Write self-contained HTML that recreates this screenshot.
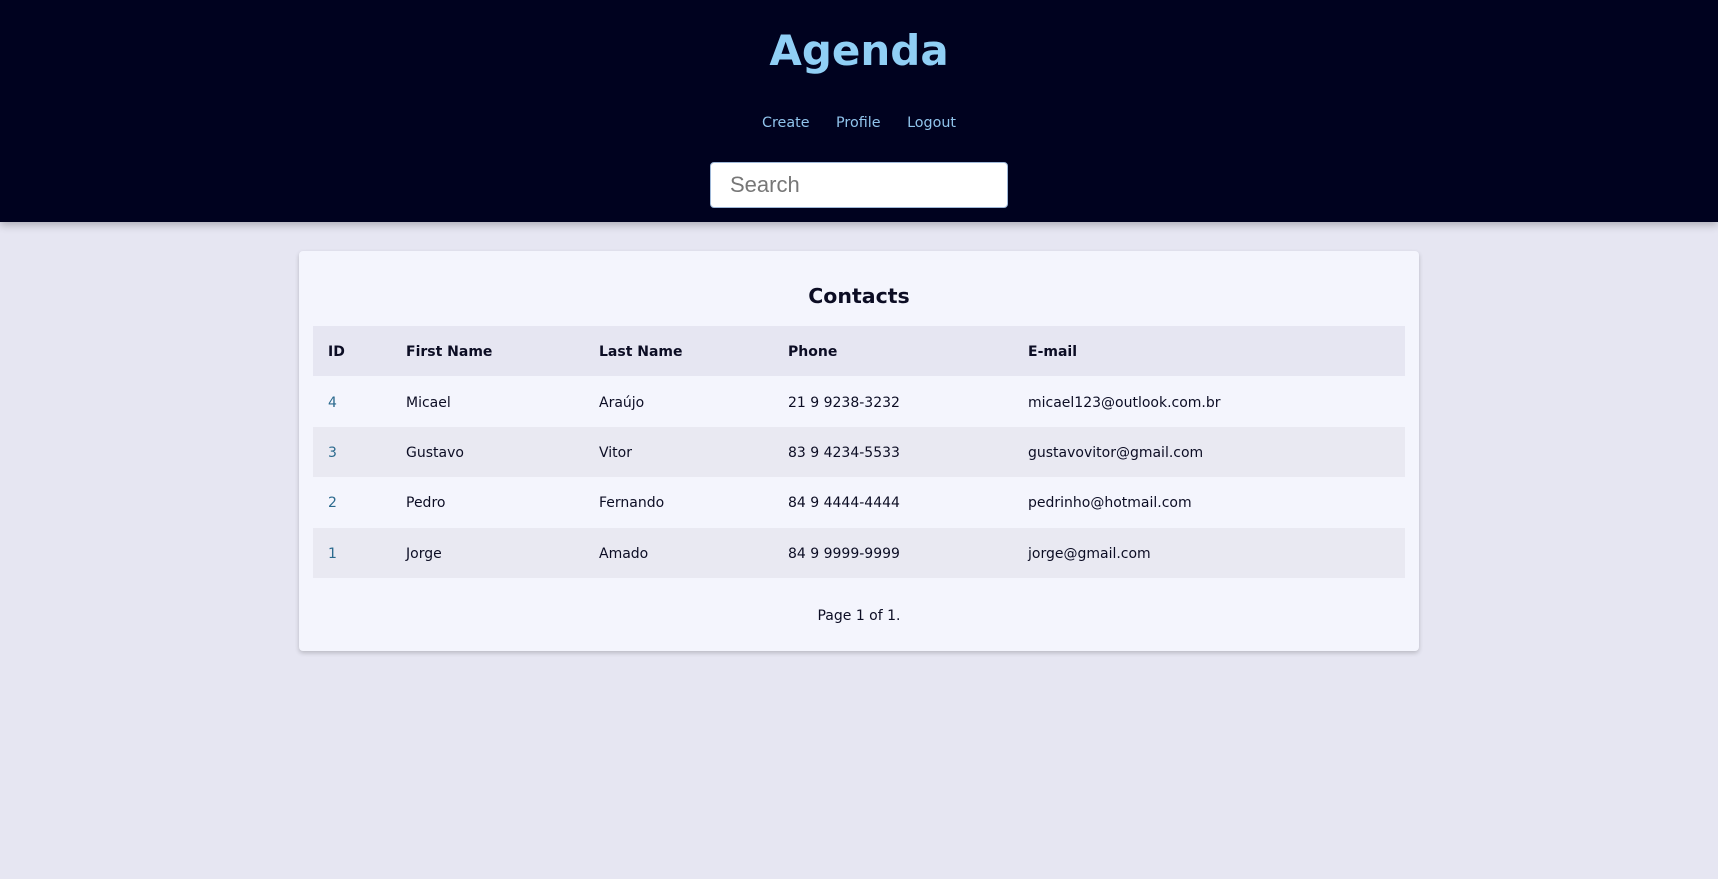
<!DOCTYPE html>
<html><head><meta charset="utf-8"><style>
*{box-sizing:border-box;margin:0;padding:0}
body{width:1718px;height:879px;background:#e6e6f2;font-family:"DejaVu Sans","Liberation Sans",sans-serif;color:#0c0d24;overflow:hidden}
header{height:222px;background:#00021f;text-align:center;box-shadow:0 3px 8px rgba(0,0,0,.25);position:relative}
h1{position:absolute;left:0;right:0;top:23px;font-size:42px;font-weight:bold;color:#90cff5;line-height:56px}
nav{position:absolute;left:0;right:0;top:112px;font-size:14.3px;line-height:22px}
nav a{color:#90c4ec;text-decoration:none;margin:0 11px}
.search{position:absolute;left:710px;top:162px;width:298px;height:46px;background:#fff;border:1px solid #9fb8d8;border-radius:4px;font-family:"Liberation Sans",sans-serif;font-size:22px;color:#777;padding-left:19px;line-height:44px;text-align:left}
.card{position:absolute;left:299px;top:251px;width:1120px;height:400px;background:#f4f5fd;border-radius:4px;box-shadow:0 2px 5px rgba(0,0,0,.2)}
h2{position:absolute;left:0;right:0;top:282px;text-align:center;font-size:20.5px;font-weight:bold;line-height:28px}
table{position:absolute;left:313px;top:326px;width:1092px;border-collapse:collapse;font-size:14px}
td,th{height:50.4px;padding:2px 0 0 15px;text-align:left;vertical-align:middle}
th{font-weight:bold;background:#e6e6f2}
tr.s td{background:#e9e9f2}
td.id{color:#2b6a8e}
.page{position:absolute;left:0;right:0;top:605px;text-align:center;font-size:14px;line-height:22px}
</style></head><body>
<header><h1>Agenda</h1>
<nav><a>Create</a> <a>Profile</a> <a>Logout</a></nav>
<div class="search">Search</div></header>
<div class="card"></div>
<h2>Contacts</h2>
<table>
<colgroup><col style="width:78px"><col style="width:193px"><col style="width:189px"><col style="width:240px"><col></colgroup>
<tr><th>ID</th><th>First Name</th><th>Last Name</th><th>Phone</th><th>E-mail</th></tr>
<tr><td class="id">4</td><td>Micael</td><td>Araújo</td><td>21 9 9238-3232</td><td>micael123@outlook.com.br</td></tr>
<tr class="s"><td class="id">3</td><td>Gustavo</td><td>Vitor</td><td>83 9 4234-5533</td><td>gustavovitor@gmail.com</td></tr>
<tr><td class="id">2</td><td>Pedro</td><td>Fernando</td><td>84 9 4444-4444</td><td>pedrinho@hotmail.com</td></tr>
<tr class="s"><td class="id">1</td><td>Jorge</td><td>Amado</td><td>84 9 9999-9999</td><td>jorge@gmail.com</td></tr>
</table>
<div class="page">Page 1 of 1.</div>
</body></html>
